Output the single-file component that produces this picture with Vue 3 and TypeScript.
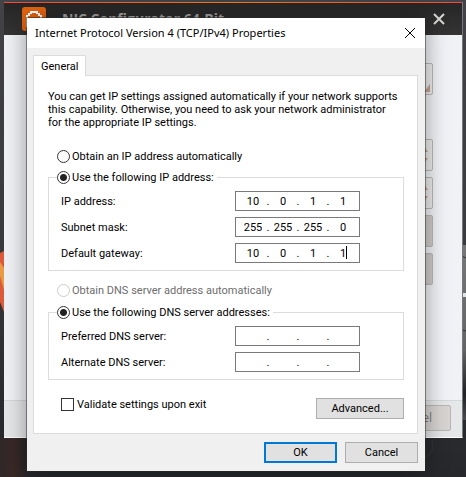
<script setup lang="ts">
import { ref } from 'vue'

interface AddressRow {
  id: string
  label: string
  octets: string[]
  caret?: boolean
}

const ipMode = ref<'auto' | 'manual'>('manual')
const dnsMode = ref<'auto' | 'manual'>('manual')
const validateOnExit = ref(false)

const ipRows = ref<AddressRow[]>([
  { id: 'ip', label: 'IP address:', octets: ['10', '0', '1', '1'] },
  { id: 'mask', label: 'Subnet mask:', octets: ['255', '255', '255', '0'] },
  { id: 'gateway', label: 'Default gateway:', octets: ['10', '0', '1', '1'], caret: true },
])

const dnsRows = ref<AddressRow[]>([
  { id: 'dns1', label: 'Preferred DNS server:', octets: ['', '', '', ''] },
  { id: 'dns2', label: 'Alternate DNS server:', octets: ['', '', '', ''] },
])
</script>

<template>
  <main class="desktop">
    <svg class="wallpaper" viewBox="0 0 466 477" preserveAspectRatio="none" aria-hidden="true">
      <defs>
        <linearGradient id="base" x1="0" y1="0" x2="0" y2="1">
          <stop offset="0" stop-color="#434347" />
          <stop offset="0.5" stop-color="#3a3b3f" />
          <stop offset="0.85" stop-color="#2b2c30" />
          <stop offset="1" stop-color="#27282c" />
        </linearGradient>
        <linearGradient id="metal" x1="0" y1="0" x2="0" y2="1">
          <stop offset="0" stop-color="#77777a" />
          <stop offset="0.6" stop-color="#626365" />
          <stop offset="0.85" stop-color="#202124" />
          <stop offset="1" stop-color="#4a4b4e" />
        </linearGradient>
        <linearGradient id="ember" x1="0" y1="0" x2="1" y2="0">
          <stop offset="0" stop-color="#30282a" />
          <stop offset="0.5" stop-color="#3a2826" />
          <stop offset="1" stop-color="#292629" />
        </linearGradient>
      </defs>
      <rect width="466" height="477" fill="url(#base)" />
      <path d="M0 438H27V477H0Z" fill="url(#ember)" />
      <path d="M0 253L4 251V312L0 302Z" fill="#dc5b3c" />
      <path d="M0 262L4 268V290L0 276Z" fill="#e99b47" />
      <path d="M462 245h4v175h-4z" fill="url(#metal)" />
      <path d="M462 293h4v4h-4z" fill="#dfe5e9" />
      <path d="M462 256l4 2M462 330l4 1" stroke="#303135" />
      <path d="M432 440a14 14 0 0 1-7 18" fill="none" stroke="#35363a" />
    </svg>

    <section class="app-window" aria-label="NIC Configurator">
      <header class="app-bar">
        <svg class="logo" viewBox="0 0 24 24" aria-hidden="true">
          <rect width="24" height="24" rx="3" fill="#e5640f" />
          <path d="M4 12V8H6V6H8V4H16V6H18V8H20V20H4Z" fill="#fff" />
          <path d="M6 12V9H8V7H10V6H14V7H16V9H18V12Z" fill="#e5640f" />
        </svg>
        <h1 class="app-title">NIC Configurator 64-Bit</h1>
        <button class="app-close" type="button" aria-label="Close configurator">
          <svg viewBox="0 0 12 12" aria-hidden="true">
            <path d="M1 1L11 11M11 1L1 11" stroke="#d8d6d3" stroke-width="2" />
          </svg>
        </button>
      </header>
      <div class="app-body">
        <div class="slot tall"><svg class="corner" viewBox="0 0 6 8"><path d="M6 0V8H0Z" fill="#c4a391" /></svg></div>
        <div class="slot"><svg class="spin" viewBox="0 0 6 14"><path d="M0 4L3 0L6 4ZM0 10H6L3 14Z" fill="#c4a391" /></svg></div>
        <div class="slot"><svg class="spin" viewBox="0 0 6 14"><path d="M0 4L3 0L6 4ZM0 10H6L3 14Z" fill="#c4a391" /></svg></div>
        <div class="slot filled"></div>
        <div class="slot filled"></div>
      </div>
      <footer class="app-footer">
        <button class="app-cancel" type="button">Cancel</button>
      </footer>
    </section>

    <section class="dialog" role="dialog" aria-labelledby="dialog-title">
      <header class="title-bar">
        <h2 id="dialog-title" class="title">Internet Protocol Version 4 (TCP/IPv4) Properties</h2>
        <button class="close" type="button" aria-label="Close">
          <svg viewBox="0 0 10 10" aria-hidden="true">
            <path d="M0 0L10 10M10 0L0 10" stroke="#000" />
          </svg>
        </button>
      </header>

      <form class="content" @submit.prevent>
        <div class="tabs" role="tablist">
          <button class="tab" type="button" role="tab" aria-selected="true">General</button>
        </div>

        <div class="panel" role="tabpanel">
          <p class="intro">
            You can get IP settings assigned automatically if your network supports<br />
            this capability. Otherwise, you need to ask your network administrator<br />
            for the appropriate IP settings.
          </p>

          <label class="choice lone">
            <input v-model="ipMode" type="radio" name="ip-mode" value="auto" />
            <span>Obtain an IP address automatically</span>
          </label>
          <fieldset class="group">
            <legend class="legend">
              <label class="choice">
                <input v-model="ipMode" type="radio" name="ip-mode" value="manual" />
                <span>Use the following IP address:</span>
              </label>
            </legend>
            <div v-for="row in ipRows" :key="row.id" class="row">
              <label :for="`${row.id}-0`">{{ row.label }}</label>
              <div class="address">
                <template v-for="(_, i) in row.octets" :key="i">
                  <span v-if="i > 0" class="dot">.</span>
                  <span class="octet">
                    <input :id="`${row.id}-${i}`" v-model="row.octets[i]" maxlength="3" :aria-label="`${row.label} ${i + 1}`" />
                    <i v-if="row.caret && i === 3" class="caret"></i>
                  </span>
                </template>
              </div>
            </div>
          </fieldset>

          <label class="choice lone second disabled">
            <input v-model="dnsMode" type="radio" name="dns-mode" value="auto" disabled />
            <span>Obtain DNS server address automatically</span>
          </label>
          <fieldset class="group">
            <legend class="legend">
              <label class="choice">
                <input v-model="dnsMode" type="radio" name="dns-mode" value="manual" />
                <span>Use the following DNS server addresses:</span>
              </label>
            </legend>
            <div v-for="row in dnsRows" :key="row.id" class="row">
              <label :for="`${row.id}-0`">{{ row.label }}</label>
              <div class="address">
                <template v-for="(_, i) in row.octets" :key="i">
                  <span v-if="i > 0" class="dot">.</span>
                  <span class="octet">
                    <input :id="`${row.id}-${i}`" v-model="row.octets[i]" maxlength="3" :aria-label="`${row.label} ${i + 1}`" />
                  </span>
                </template>
              </div>
            </div>
          </fieldset>

          <div class="options">
            <label class="choice">
              <input v-model="validateOnExit" type="checkbox" />
              <span>Validate settings upon exit</span>
            </label>
            <button class="button wide" type="button">Advanced...</button>
          </div>
        </div>

        <div class="actions">
          <button class="button primary" type="submit">OK</button>
          <button class="button" type="button">Cancel</button>
        </div>
      </form>
    </section>
  </main>
</template>

<style>
body {
  margin: 0;
}
</style>

<style scoped>
* {
  box-sizing: border-box;
}

.desktop {
  position: relative;
  min-height: 100vh;
  overflow: hidden;
  background: #343539;
  color: #000;
  font: 11px/13px Roboto, "DejaVu Sans Condensed", sans-serif;
}

button,
input {
  margin: 0;
  padding: 0;
  color: inherit;
  font: inherit;
}

.wallpaper {
  position: absolute;
  inset: 0;
  width: 100%;
  height: 100%;
}

/* Window behind the dialog */
.app-window {
  position: absolute;
  top: 2px;
  left: 4px;
  right: 3px;
  background: #f0f2f5;
  border-right: 1px solid #77787a;
  border-bottom: 1px solid #fff;
}

.app-bar {
  display: flex;
  align-items: center;
  height: 33px;
  padding: 0 17px 0 18px;
  border-top: 1px solid;
  border-image: linear-gradient(90deg, #f4483c, #f47a0c 50%, #f4483c) 1;
  background: linear-gradient(#262626, #343434);
}

.logo {
  width: 24px;
  height: 24px;
}

.app-title {
  flex: 1;
  margin: 0 0 0 16px;
  color: #a5a3a0;
  font: bold 14px/20px "Open Sans", sans-serif;
}

.app-close {
  display: flex;
  border: 0;
  background: none;
}

.app-close svg {
  width: 12px;
  height: 12px;
}

.app-body {
  display: flex;
  flex-direction: column;
  gap: 6px;
  height: 365px;
  padding: 28px 29px 0 24px;
}

.slot {
  display: flex;
  align-items: center;
  justify-content: flex-end;
  height: 32px;
  padding: 0 4px;
  border: 1px solid #bbb9b8;
  border-radius: 2px;
  background: #eeedee;
}

.slot.tall {
  align-items: flex-end;
  margin-bottom: 38px;
  padding: 2px;
}

.slot.filled {
  background: #cfccca;
}

.corner {
  width: 6px;
  height: 8px;
}

.spin {
  width: 6px;
  height: 14px;
}

.app-footer {
  display: flex;
  justify-content: flex-end;
  padding: 4px 11px 6px;
  border-top: 1px solid #d3d8da;
  background: #e5e7e9;
}

.app-cancel {
  width: 80px;
  height: 26px;
  padding-right: 18px;
  border: 1px solid #b9b6b4;
  border-radius: 2px;
  background: #d7d4d2;
  color: #77797c;
  font: 12px/16px "Open Sans", sans-serif;
  text-align: right;
}

/* Dialog */
.dialog {
  position: absolute;
  top: 18px;
  left: 27px;
  right: 41px;
  background: #f0f0f0;
  box-shadow: 0 0 0 1px rgba(40, 40, 40, 0.5), 0 2px 22px rgba(0, 0, 0, 0.4);
}

.title-bar {
  display: flex;
  align-items: center;
  justify-content: space-between;
  height: 30px;
  padding: 0 10px 0 8px;
  background: #fff;
}

.title {
  margin: 0;
  font: 11px/16px "Noto Sans", sans-serif;
  white-space: nowrap;
}

.close {
  display: flex;
  border: 0;
  background: none;
}

.close svg {
  width: 10px;
  height: 10px;
}

.content {
  padding: 7px 7px 8px 6px;
}

.tabs {
  display: flex;
}

.tab {
  position: relative;
  z-index: 1;
  height: 21px;
  margin-bottom: -1px;
  padding: 0 7px;
  border: 1px solid #dcdcdc;
  border-bottom: 0;
  background: #fff;
}

.panel {
  padding: 14px 13px 14px 14px;
  border: 1px solid #dcdcdc;
  background: #fff;
}

.intro {
  margin: 0;
  white-space: nowrap;
}

.choice {
  display: flex;
  align-items: center;
  gap: 2px;
  height: 13px;
  white-space: nowrap;
}

.lone {
  margin: 21px 0 8px 9px;
}

.lone.second {
  margin: 13px 0 9px 9px;
}

.disabled {
  color: #6d6d6d;
}

input[type="radio"],
input[type="checkbox"] {
  flex: none;
  width: 13px;
  height: 13px;
  border: 1px solid #333;
  background: #fff;
  appearance: none;
}

input[type="radio"] {
  border-radius: 50%;
}

input[type="radio"]:checked {
  background: radial-gradient(circle, #222 3px, #fff 4px);
}

input[type="radio"]:disabled {
  border-color: #ccc;
}

input[type="checkbox"]:checked {
  box-shadow: inset 0 0 0 3px #fff;
  background: #222;
}

.group {
  display: flex;
  flex-direction: column;
  gap: 6px;
  min-width: 0;
  margin: 0;
  padding: 7px 43px 7px 12px;
  border: 1px solid #dcdcdc;
}

.legend {
  margin-left: -4px;
  padding: 0 3px 0 0;
}

.row {
  display: flex;
  align-items: center;
  justify-content: space-between;
}

.address {
  display: flex;
  align-items: center;
  height: 20px;
  padding: 0 3px 0 4px;
  border: 1px solid #7a7a7a;
  background: #fff;
}

.octet {
  position: relative;
  display: flex;
}

.octet input {
  width: 26px;
  height: 16px;
  border: 0;
  outline: 0;
  background: none;
  text-align: center;
}

.dot {
  width: 4px;
  text-align: center;
}

.caret {
  position: absolute;
  top: 1px;
  left: 16px;
  width: 1px;
  height: 13px;
  background: #000;
}

.options {
  display: flex;
  align-items: center;
  justify-content: space-between;
  margin-top: 18px;
  padding-left: 13px;
}

.options .choice {
  gap: 3px;
  margin-bottom: 8px;
}

.button {
  width: 73px;
  height: 21px;
  border: 1px solid #adadad;
  background: #e1e1e1;
}

.button.wide {
  width: 88px;
}

.button.primary {
  border: 2px solid #0078d7;
}

.actions {
  display: flex;
  justify-content: flex-end;
  gap: 8px;
  margin-top: 8px;
}
</style>
